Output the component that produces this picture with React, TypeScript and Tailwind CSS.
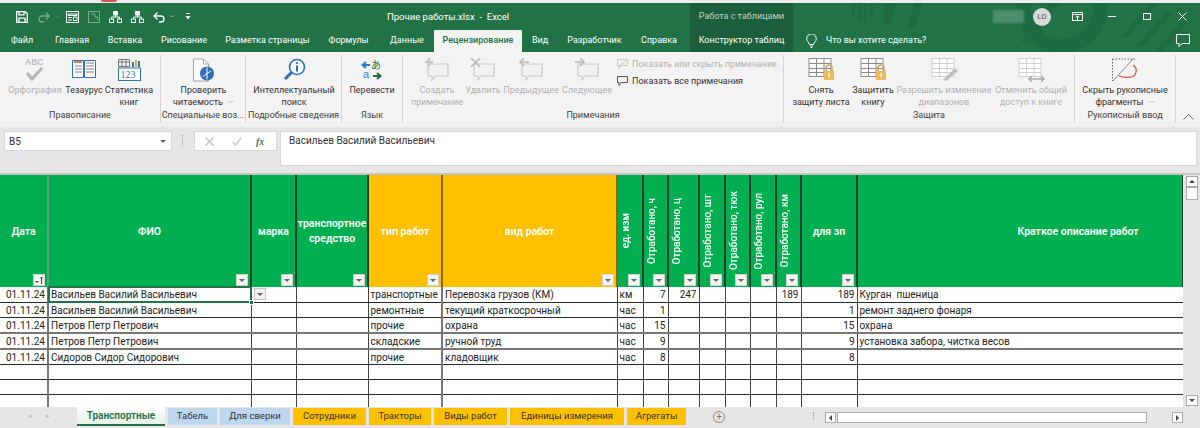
import type { ReactNode } from "react";

const UI_FONT = "font-['Roboto',sans-serif]";
const CELL_FONT = "font-['Roboto',sans-serif]";

const colWidths = [48, 203, 45, 72, 74, 175, 26, 25, 31, 26, 25, 26, 25, 56, 326];

type Row = { cells: string[]; heavy?: boolean };

const rows: Row[] = [
  { cells: ["01.11.24", "Васильев Василий Васильевич", "", "", "транспортные", "Перевозка грузов (КМ)", "км", "7", "247", "", "", "", "189", "189", "Курган  пшеница"] },
  { cells: ["01.11.24", "Васильев Василий Васильевич", "", "", "ремонтные", "текущий краткосрочный", "час", "1", "", "", "", "", "", "1", "ремонт заднего фонаря"] },
  { cells: ["01.11.24", "Петров Петр Петрович", "", "", "прочие", "охрана", "час", "15", "", "", "", "", "", "15", "охрана"], heavy: true },
  { cells: ["01.11.24", "Петров Петр Петрович", "", "", "складские", "ручной труд", "час", "9", "", "", "", "", "", "9", "установка забора, чистка весов"], heavy: true },
  { cells: ["01.11.24", "Сидоров Сидор Сидорович", "", "", "прочие", "кладовщик", "час", "8", "", "", "", "", "", "8", ""] },
  { cells: Array(15).fill("") },
  { cells: Array(15).fill("") },
  { cells: Array(15).fill("") },
];

const rightAligned = [0, 7, 8, 12, 13];

const headers: { label: string; orange?: boolean; vertical?: boolean; noFilter?: boolean; sort?: boolean }[] = [
  { label: "Дата", sort: true },
  { label: "ФИО" },
  { label: "марка" },
  { label: "транспортное средство" },
  { label: "тип работ", orange: true },
  { label: "вид работ", orange: true },
  { label: "ед. изм", vertical: true },
  { label: "Отработано, ч", vertical: true },
  { label: "Отработано, ц", vertical: true },
  { label: "Отработано, шт", vertical: true },
  { label: "Отработано, тюк", vertical: true },
  { label: "Отработано, рул", vertical: true },
  { label: "Отработано, км", vertical: true },
  { label: "для зп" },
  { label: "Краткое описание работ", noFilter: true },
];

const sheets = [
  { name: "Табель", w: "w-[49px]", bg: "bg-[#bdd7ee]" },
  { name: "Для сверки", w: "w-[70px]", bg: "bg-[#bdd7ee]" },
  { name: "Сотрудники", w: "w-[73px]", bg: "bg-[#ffc000]" },
  { name: "Тракторы", w: "w-[62px]", bg: "bg-[#ffc000]" },
  { name: "Виды работ", w: "w-[73px]", bg: "bg-[#ffc000]" },
  { name: "Единицы измерения", w: "w-[114px]", bg: "bg-[#ffc000]" },
  { name: "Агрегаты", w: "w-[59px]", bg: "bg-[#ffc000]" },
];

const tabs = [
  { name: "Файл", w: "w-[44px]" },
  { name: "Главная", w: "w-[56px]" },
  { name: "Вставка", w: "w-[50px]" },
  { name: "Рисование", w: "w-[68px]" },
  { name: "Разметка страницы", w: "w-[99px]" },
  { name: "Формулы", w: "w-[63px]" },
  { name: "Данные", w: "w-[54px]" },
];

function Group({ w, label, children }: { w: string; label: string; children: ReactNode }) {
  return (
    <div className={`${w} flex h-[67px] shrink-0 flex-col border-r border-[#d2d2d2]`}>
      <div className="flex flex-1">{children}</div>
      <div className="h-[13px] whitespace-nowrap text-center text-[9px] leading-[13px] text-[#444]">{label}</div>
    </div>
  );
}

function RibbonButton({
  w,
  icon,
  lines,
  disabled,
  arrow,
}: {
  w: string;
  icon: ReactNode;
  lines: string[];
  disabled?: boolean;
  arrow?: boolean;
}) {
  return (
    <div className={`${w} flex shrink-0 flex-col items-center ${disabled ? "text-[#b1b1b1]" : "text-[#333]"}`}>
      <div className="flex h-[29px] items-center justify-center">{icon}</div>
      <div className="whitespace-nowrap text-center text-[9px] leading-[12px]">
        {lines.map((line, i) => (
          <div key={line}>
            {line}
            {arrow && i === lines.length - 1 && <span className="ml-1 text-[7px] text-[#666]">﹀</span>}
          </div>
        ))}
      </div>
    </div>
  );
}

function CommentIcon({ mark }: { mark: ReactNode }) {
  return (
    <svg width="26" height="24" viewBox="0 0 26 24" fill="none" stroke="#c9c9c9" strokeWidth="1.2">
      <path d="M4 6h20v12h-13l-3 4v-4h-4z" />
      {mark}
    </svg>
  );
}

function SheetLockIcon({ lock, faded, overlay }: { lock?: boolean; faded?: boolean; overlay?: ReactNode }) {
  const c = faded ? "#d0d0d0" : "#8a8a8a";
  return (
    <svg width="28" height="25" viewBox="0 0 28 25" fill="none" stroke={c}>
      <rect x="2" y="1.5" width="22" height="18" fill="#fff" />
      <path d="M2 6.5h22M2 11.5h22M2 15.5h22M9.5 1.5v18M17 1.5v18" />
      {lock && (
        <g>
          <path d="M19 14v-3a3 3 0 0 1 6 0v3" stroke="#c9a45c" strokeWidth="1.5" />
          <rect x="17" y="14" width="10" height="9" fill="#f0b95a" stroke="none" />
          <rect x="21.3" y="16.5" width="1.5" height="4" fill="#fff" stroke="none" />
        </g>
      )}
      {overlay}
    </svg>
  );
}

function FilterButton() {
  return (
    <span className="absolute bottom-[1px] right-[2px] flex h-[12px] w-[12px] items-center justify-center border border-[#d0d0d0] bg-[#f4f4f4]">
      <span className="border-x-[3px] border-t-[3px] border-x-transparent border-t-[#666]" />
    </span>
  );
}

function SortButton() {
  return (
    <span className="absolute bottom-[1px] right-[2px] flex h-[12px] w-[12px] items-center justify-center gap-[1px] border border-[#d0d0d0] bg-[#f4f4f4]">
      <span className="mt-[3px] border-x-[2px] border-t-[2px] border-x-transparent border-t-[#444]" />
      <svg width="3" height="8" viewBox="0 0 3 8" fill="none" stroke="#444">
        <path d="M1.5 8V1M0 2.5 1.5 1 3 2.5" />
      </svg>
    </span>
  );
}

function TitleBar() {
  return (
    <div className={`${UI_FONT} relative h-[49px] bg-[#217346] text-[9px] text-white`}>
      <svg className="pointer-events-none absolute right-0 top-0" width="350" height="49" viewBox="0 0 350 49" fill="#1f6b41">
        <path d="M2 0h3v14h-3zM8 0h3v18h-3zM14 0h3v22h-3zM20 0h3v16h-3zM34 0h12l-6 22h-6z" />
        <path d="M65 0h8l-8 24h-8zM200 0h10l-30 40h-10zM300 0h8l-30 34h-8zM315 10h8l-30 34h-8zM330 20h8l-26 29h-8z" />
        <circle cx="212" cy="5" r="38" fill="none" stroke="#1f6b41" strokeWidth="14" />
      </svg>
      <div className="relative flex h-[27px] items-center">
        <div className="flex w-[387px] items-center pl-[16px]">
          <svg width="12" height="12" viewBox="0 0 12 12" fill="none" stroke="#fff" strokeWidth="1.3">
            <path d="M.7.7h8.5l2.1 2.1v8.5H.7zM3 .7v3.2h5V.7M3 11.3V7.2h6v4.1" />
          </svg>
          <svg className="ml-[10px] opacity-40" width="12" height="12" viewBox="0 0 12 12" fill="none" stroke="#fff" strokeWidth="1.3">
            <path d="M11 5H4a3 3 0 0 0 0 6h2M8 1.5 11.2 5 8 8.5" />
          </svg>
          <span className="ml-[4px] text-[6px] opacity-40">﹀</span>
          <svg className="ml-[6px]" width="13" height="12" viewBox="0 0 13 12" fill="none" stroke="#fff">
            <rect x="0.5" y="0.5" width="12" height="11" />
            <path d="M2 3h9v1.5H2zM2 6.5h4M2 9h4M7.5 6h3.5v3.5h-3.5z" />
          </svg>
          <svg className="ml-[9px] opacity-40" width="12" height="12" viewBox="0 0 12 12" fill="none" stroke="#fff">
            <rect x="0.5" y="0.5" width="11" height="11" />
            <path d="M3 3h4v3h2.5v3" />
          </svg>
          {[0, 1].map((n) => (
            <svg key={n} className="ml-[9px]" width="13" height="12" viewBox="0 0 13 12" fill="none" stroke="#fff">
              <rect x="4.5" y="0.5" width="4" height="3.5" fill="#fff" />
              <rect x="0.5" y="8" width="4" height="3.5" />
              <rect x="8.5" y="8" width="4" height="3.5" />
              <path d="M6.5 4v2H2.5v2M6.5 6h4v2" />
            </svg>
          ))}
          <svg className="ml-[9px]" width="12" height="12" viewBox="0 0 12 12" fill="none" stroke="#fff" strokeWidth="1.3">
            <path d="M1.5 5H8a3 3 0 0 1 0 6H6M4.5 1.5 1 5l3.5 3.5" />
          </svg>
          <span className="ml-[4px] text-[6px]">﹀</span>
          <svg className="ml-[10px]" width="6" height="7" viewBox="0 0 6 7" fill="#fff">
            <path d="M1 0h4v1H1zM0.5 3h5L3 6.5z" />
          </svg>
        </div>
        <div className="flex-1 whitespace-pre pt-[2px] text-[9.5px]">Прочие работы.xlsx  -  Excel</div>
        <div className="flex h-[27px] w-[103px] items-center justify-center bg-[#1c5f3c] text-[#b9d2c4]">Работа с таблицами</div>
        <div className="flex w-[407px] items-center">
          <div className="ml-[200px] h-[13px] w-[31px] bg-[#4d8f6d] blur-[1px]" />
          <div className="ml-[9px] flex h-[18px] w-[18px] items-center justify-center rounded-full bg-[#d9d9d9] text-[8px] text-[#555]">LD</div>
          <svg className="ml-[21px]" width="11" height="9" viewBox="0 0 11 9" fill="none" stroke="#fff">
            <rect x="0.5" y="0.5" width="10" height="8" />
            <path d="M0.5 2.5h10M5.5 8V4M3.8 5.5l1.7-1.7 1.7 1.7" />
          </svg>
          <span className="ml-[25px] h-[1px] w-[8px] bg-white" />
          <span className="ml-[27px] h-[7px] w-[8px] border border-white" />
          <svg className="ml-[27px]" width="9" height="9" viewBox="0 0 9 9" stroke="#fff">
            <path d="M0.5 0.5l8 8M8.5 0.5l-8 8" />
          </svg>
        </div>
      </div>
      <div className="relative flex h-[22px]">
        {tabs.map((t) => (
          <div key={t.name} className={`${t.w} flex items-center justify-center`}>{t.name}</div>
        ))}
        <div className="flex w-[88px] items-center justify-center bg-[#f3f3f3] font-medium text-[#217346]">Рецензирование</div>
        <div className="flex w-[36px] items-center justify-center">Вид</div>
        <div className="flex w-[73px] items-center justify-center">Разработчик</div>
        <div className="flex w-[56px] items-center justify-center">Справка</div>
        <div className="ml-[3px] flex w-[103px] items-center justify-center bg-[#1c5f3c]">Конструктор таблиц</div>
        <div className="ml-[13px] flex items-center">
          <svg width="11" height="14" viewBox="0 0 11 14" fill="none" stroke="#fff">
            <path d="M3.5 10.5C3 8 .7 7.3.7 4.7a4.8 4.8 0 0 1 9.6 0c0 2.6-2.3 3.3-2.8 5.8zM4 12h3M4.5 13.5h2" />
          </svg>
          <span className="ml-[9px]">Что вы хотите сделать?</span>
        </div>
        <svg className="absolute right-[10px] top-[4px]" width="14" height="13" viewBox="0 0 14 13" fill="none" stroke="#fff">
          <path d="M.5.5h13v9H6l-3 3v-3H.5z" />
        </svg>
      </div>
    </div>
  );
}

function Ribbon() {
  return (
    <div className={`${UI_FONT} flex h-[70px] items-start bg-[#f3f3f3] pt-[3px]`}>
      <Group w="w-[161px]" label="Правописание">
        <RibbonButton
          w="w-[62px] pl-[8px]"
          disabled
          lines={["Орфография"]}
          icon={
            <svg width="20" height="26" viewBox="0 0 20 26" fill="none">
              <text x="0" y="8" fontSize="8.5" fontWeight="700" fill="#bdbdbd" fontFamily="Liberation Sans">ABC</text>
              <path d="M2 16l5 6 10-11" stroke="#b5b5b5" strokeWidth="3" />
            </svg>
          }
        />
        <RibbonButton
          w="w-[44px]"
          lines={["Тезаурус"]}
          icon={
            <svg width="24" height="21" viewBox="0 0 24 21" fill="#fff" stroke="#2f72b8">
              <path d="M.5 1.5h11v17h-11zM12.5 1.5h11v17h-11z" />
              <path d="M2 3h8" stroke="#c8502d" strokeWidth="1.5" />
              <path d="M3 7h7M3 10h7M3 13h7M14 4h8M14 7h8M14 10h8M14 13h8" stroke="#7f7f7f" />
            </svg>
          }
        />
        <RibbonButton
          w="w-[46px]"
          lines={["Статистика", "книг"]}
          icon={
            <svg width="23" height="22" viewBox="0 0 23 22" fill="none">
              <path d="M.5.5h11v7h-11zM.5 3h11M4 .5v7M8 .5v7" stroke="#777" />
              <path d="M14 8V3h2v5z" fill="#2f72b8" />
              <path d="M17 8V1h2v7z" fill="#e8a33b" />
              <path d="M20 8V2h2v6z" fill="#2f72b8" />
              <rect x=".5" y="9" width="22" height="12.5" fill="#fff" stroke="#2f72b8" />
              <text x="2.5" y="19" fontSize="10" fill="#2f72b8" fontFamily="Liberation Serif">123</text>
            </svg>
          }
        />
      </Group>
      <Group w="w-[85px]" label="Специальные воз...">
        <RibbonButton
          w="w-[85px]"
          arrow
          lines={["Проверить", "читаемость"]}
          icon={
            <svg width="22" height="24" viewBox="0 0 22 24" fill="none">
              <path d="M.5 1h10l5 5v17H.5z" fill="#fff" stroke="#a6a6a6" />
              <path d="M10.5 1v5h5" stroke="#a6a6a6" />
              <circle cx="14" cy="15.5" r="7" fill="#2b6fb6" />
              <path d="M14 9.5v6l4-2.5M14 15.5l-4 3M14 15.5v6" stroke="#fff" />
            </svg>
          }
        />
      </Group>
      <Group w="w-[96px]" label="Подробные сведения">
        <RibbonButton
          w="w-[96px]"
          lines={["Интеллектуальный", "поиск"]}
          icon={
            <svg width="23" height="23" viewBox="0 0 23 23" fill="none">
              <circle cx="14" cy="9" r="7.5" fill="#fff" stroke="#2b6fb6" strokeWidth="1.6" />
              <path d="M8.5 14.5 2 21" stroke="#2b6fb6" strokeWidth="3" />
              <circle cx="14" cy="5.2" r="1.1" fill="#2b6fb6" />
              <path d="M14 7.5v6" stroke="#2b6fb6" strokeWidth="2" />
            </svg>
          }
        />
      </Group>
      <Group w="w-[61px]" label="Язык">
        <RibbonButton
          w="w-[60px]"
          lines={["Перевести"]}
          icon={
            <svg width="24" height="26" viewBox="0 0 24 26" fill="none">
              <path d="M10 8H4M6 5 2.5 8 6 11" stroke="#2b7cd3" strokeWidth="2" />
              <path d="M13 19h6M17 16l3.5 3-3.5 3" stroke="#217346" strokeWidth="2" />
              <text x="11" y="12" fontSize="10" fill="#217346" fontFamily="Noto Sans CJK JP">あ</text>
              <text x="3" y="21" fontSize="11" fill="#2b7cd3" fontFamily="Liberation Sans">a</text>
            </svg>
          }
        />
      </Group>
      <Group w="w-[381px]" label="Примечания">
        <RibbonButton w="w-[60px] pl-[8px]" disabled lines={["Создать", "примечание"]} icon={<CommentIcon mark={<path d="M5 0v8M1 4h8" stroke="#c4c4c4" strokeWidth="2.5" />} />} />
        <RibbonButton w="w-[40px]" disabled lines={["Удалить"]} icon={<CommentIcon mark={<path d="M1 0l9 9M10 0 1 9" stroke="#b8b8b8" strokeWidth="1.6" />} />} />
        <RibbonButton w="w-[56px]" disabled lines={["Предыдущее"]} icon={<CommentIcon mark={<path d="M11 4H2M6 0 2 4l4 4" stroke="#b8b8b8" strokeWidth="1.6" />} />} />
        <RibbonButton w="w-[56px]" disabled lines={["Следующее"]} icon={<CommentIcon mark={<path d="M1 4h9M6 0l4 4-4 4" stroke="#b8b8b8" strokeWidth="1.6" />} />} />
        <div className="ml-[2px] flex flex-col gap-[5px] whitespace-nowrap pt-[3px] text-[9px] leading-[12px]">
          <div className="flex items-center gap-[4px] text-[#b1b1b1]">
            <svg width="11" height="10" viewBox="0 0 11 10" fill="none" stroke="#c9c9c9"><path d="M.5.5h10v6H4l-2 3v-3H.5zM2 7l8-6" /></svg>
            Показать или скрыть примечание
          </div>
          <div className="flex items-center gap-[4px] text-[#333]">
            <svg width="11" height="10" viewBox="0 0 11 10" fill="none" stroke="#555"><path d="M.5.5h10v6H4l-2 3v-3H.5z" /></svg>
            Показать все примечания
          </div>
        </div>
      </Group>
      <Group w="w-[291px]" label="Защита">
        <RibbonButton w="w-[70px] pl-[4px]" lines={["Снять", "защиту листа"]} icon={<SheetLockIcon lock />} />
        <RibbonButton w="w-[38px]" lines={["Защитить", "книгу"]} icon={<SheetLockIcon lock />} />
        <RibbonButton
          w="w-[104px]"
          disabled
          lines={["Разрешить изменение", "диапазонов"]}
          icon={<SheetLockIcon faded overlay={<path d="M13 23 25 11l3 3-12 10z" fill="#bdbdbd" stroke="none" />} />}
        />
        <RibbonButton
          w="w-[70px]"
          disabled
          lines={["Отменить общий", "доступ к книге"]}
          icon={<SheetLockIcon faded overlay={<path d="M12 22h15M15 19l-3 3 3 3M24 19l3 3-3 3" stroke="#a9a9a9" strokeWidth="1.5" />} />}
        />
      </Group>
      <Group w="w-[101px]" label="Рукописный ввод">
        <RibbonButton
          w="w-[100px]"
          arrow
          lines={["Скрыть рукописные", "фрагменты"]}
          icon={
            <svg width="26" height="24" viewBox="0 0 26 24" fill="none">
              <path d="M.5 1v22M.5 1h23" stroke="#666" strokeDasharray="1.5 1.5" />
              <path d="M1 23 21 1" stroke="#8a8a8a" />
              <path d="M21 7c5 3 4 11-2 12-4 1-9 0-12-1" stroke="#d2492a" strokeWidth="1.2" />
            </svg>
          }
        />
      </Group>
      <div className="relative h-[67px] flex-1">
        <svg className="absolute bottom-[2px] left-[7px]" width="11" height="6" viewBox="0 0 11 6" fill="none" stroke="#666">
          <path d="M.5 5.5l5-5 5 5" />
        </svg>
      </div>
    </div>
  );
}

function FormulaBar() {
  return (
    <div className={`${UI_FONT} h-[51px] border-t-[5px] border-[#f0f0f0] bg-[#e6e6e6] pl-[4px] pr-[3px] pt-[4px]`}>
      <div className="flex items-start">
        <div className="flex h-[20px] w-[168px] items-center justify-between border border-[#d6d6d6] bg-white pl-[4px] pr-[5px] text-[10px] text-[#333]">
          B5
          <span className="border-x-[3px] border-t-[3px] border-x-transparent border-t-[#666]" />
        </div>
        <div className="ml-[10px] mt-[4px] h-[11px] w-[2px] border-l border-dotted border-[#999]" />
        <div className="ml-[10px] flex h-[20px] w-[83px] items-center border border-[#d6d6d6] bg-white text-[#bbb]">
          <svg className="ml-[10px]" width="9" height="9" viewBox="0 0 9 9" stroke="#bdbdbd" strokeWidth="1.2">
            <path d="M.5.5l8 8M8.5.5l-8 8" />
          </svg>
          <svg className="ml-[18px]" width="10" height="9" viewBox="0 0 10 9" fill="none" stroke="#c9c9c9" strokeWidth="1.4">
            <path d="M.8 5l2.8 3L9.3.5" />
          </svg>
          <span className="ml-[14px] font-['Liberation_Serif',serif] text-[10px] font-bold italic text-[#666]">fx</span>
        </div>
        <div className="ml-[3px] h-[35px] flex-1 border border-[#d6d6d6] bg-white pl-[8px] pt-[2px] text-[10px] leading-[14px] text-[#333]">
          Васильев Василий Васильевич
        </div>
      </div>
    </div>
  );
}

function Sheet() {
  return (
    <div className="flex h-[234px] border-t-2 border-[#c4c4c4] bg-white">
      <div className="w-[1183px] shrink-0 overflow-hidden">
        <table className={`${CELL_FONT} w-[1183px] table-fixed border-collapse text-[10px] text-[#222]`}>
          <colgroup>
            {colWidths.map((w, i) => (
              <col key={i} style={{ width: w }} />
            ))}
          </colgroup>
          <thead>
            <tr className="h-[112px]">
              {headers.map((h, i) => (
                <th
                  key={h.label}
                  className={`relative border-r-2 border-[#1d3f2c] p-0 text-center align-middle text-[10.5px] font-semibold leading-[15px] text-white ${
                    h.orange ? "border-[#8a6a00] bg-[#ffc000]" : "bg-[#00b050]"
                  } ${i === 0 ? "border-[#6e9a80]" : ""} ${i === 14 ? "border-r-0 pl-[116px]" : ""}`}
                >
                  {h.vertical ? (
                    <div className={`mx-auto rotate-180 whitespace-nowrap text-[10px] [writing-mode:vertical-rl] ${h.label === "ед. изм" ? "" : "font-medium"}`}>{h.label}</div>
                  ) : (
                    h.label
                  )}
                  {h.sort ? <SortButton /> : !h.noFilter && <FilterButton />}
                </th>
              ))}
            </tr>
          </thead>
          <tbody>
            {rows.map((row, r) => (
              <tr key={r} className="h-[15px]">
                {row.cells.map((cell, c) => (
                  <td
                    key={c}
                    className={`relative overflow-visible whitespace-pre border-r p-0 px-[2px] pt-[1px] leading-[13px] ${c === 14 ? "border-r-0" : "border-r-[#444]"} ${
                      c === 0 || c === 4 ? "border-r-2 border-r-[#777]" : ""
                    } ${row.heavy ? "border-b-2 border-b-[#777]" : "border-b border-b-[#2b2b2b]"} ${rightAligned.includes(c) ? "text-right" : "text-left"}`}
                  >
                    {cell}
                    {r === 0 && c === 1 && (
                      <>
                        <span className="absolute inset-[-1px] border-2 border-[#217346]" />
                        <span className="absolute bottom-[-3px] right-[-3px] h-[5px] w-[5px] border border-white bg-[#217346]" />
                        <span className="absolute right-[-15px] top-[1px] z-10 flex h-[12px] w-[12px] items-center justify-center border border-[#c8c8c8] bg-[#f0f0f0]">
                          <span className="border-x-[3px] border-t-[3px] border-x-transparent border-t-[#666]" />
                        </span>
                      </>
                    )}
                  </td>
                ))}
              </tr>
            ))}
          </tbody>
        </table>
      </div>
      <div className="flex flex-1 flex-col items-center bg-[#e6e6e6] pt-[1px]">
        <div className="flex h-[11px] w-[12px] items-center justify-center border border-[#ababab] bg-white">
          <span className="border-x-[3px] border-b-[3px] border-x-transparent border-b-[#444]" />
        </div>
        <div className="h-[13px] w-[12px] border border-[#ababab] bg-white" />
        <div className="flex-1" />
        <div className="mb-[1px] flex h-[11px] w-[12px] items-center justify-center border border-[#ababab] bg-white">
          <span className="border-x-[3px] border-t-[3px] border-x-transparent border-t-[#444]" />
        </div>
      </div>
    </div>
  );
}

function SheetTabs() {
  return (
    <div className={`${UI_FONT} flex h-[21px] items-start bg-[#e6e6e6] text-[9.5px] text-[#333]`}>
      <div className="flex h-[18px] w-[77px] items-center justify-center gap-[14px] text-[7px] text-[#c0c0c0]">
        <span>◂</span>
        <span>▸</span>
      </div>
      <div className="flex h-[19px] w-[88px] items-center justify-center border-b-2 border-[#217346] bg-gradient-to-b from-white to-[#e7f1e9] text-[10px] font-semibold text-[#217346]">Транспортные</div>
      <div className="ml-[3px] mt-[1px] flex gap-[3px]">
        {sheets.map((s) => (
          <div key={s.name} className={`${s.w} flex h-[17px] items-center justify-center ${s.bg}`}>{s.name}</div>
        ))}
      </div>
      <div className="ml-[27px] mt-[4px] flex h-[12px] w-[12px] items-center justify-center rounded-full border border-[#888] text-[10px] leading-none text-[#777]">+</div>
      <div className="ml-[88px] mt-[5px] h-[8px] border-l border-dotted border-[#999]" />
      <div className="ml-[11px] mt-[5px] flex h-[11px] w-[358px] items-center">
        <div className="flex h-[11px] w-[11px] items-center justify-center border border-[#ababab] bg-white">
          <span className="border-y-[3px] border-r-[3px] border-y-transparent border-r-[#444]" />
        </div>
        <div className="ml-[1px] h-[11px] w-[310px] border border-[#ababab] bg-white" />
        <div className="flex-1" />
        <div className="flex h-[11px] w-[11px] items-center justify-center border border-[#ababab] bg-white">
          <span className="border-y-[3px] border-l-[3px] border-y-transparent border-l-[#444]" />
        </div>
      </div>
    </div>
  );
}

export default function App() {
  return (
    <div className="h-[428px] w-[1200px] overflow-hidden bg-[#e6e6e6]">
      <div className="relative h-[3px] bg-[#ececec]">
        <span className="absolute left-[101px] top-0 h-[2px] w-[16px] rounded-b-full bg-[#d9534f]" />
      </div>
      <TitleBar />
      <Ribbon />
      <FormulaBar />
      <Sheet />
      <SheetTabs />
    </div>
  );
}
